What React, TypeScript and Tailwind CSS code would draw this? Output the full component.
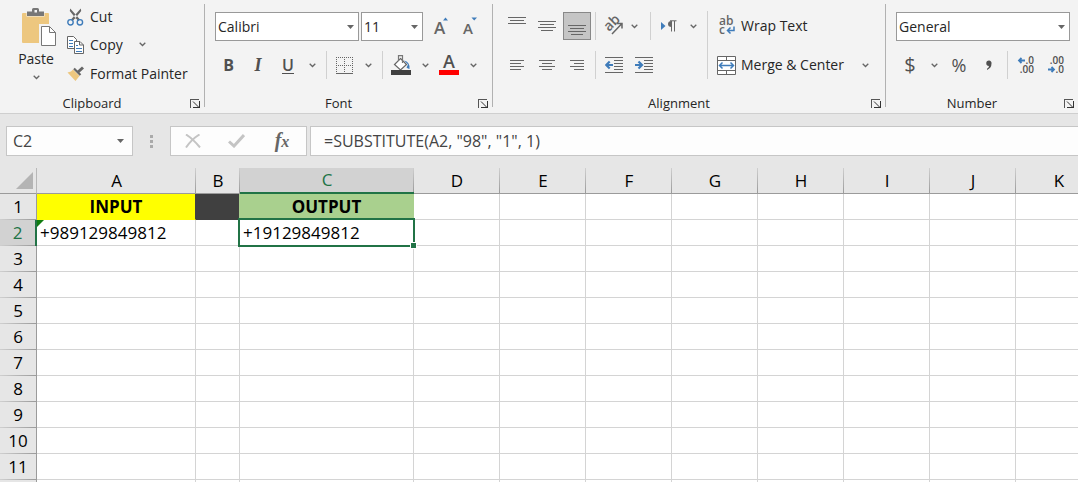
import type { ReactNode } from "react";

const columns = [
  { name: "A", width: 159 },
  { name: "B", width: 44 },
  { name: "C", width: 174 },
  { name: "D", width: 86 },
  { name: "E", width: 86 },
  { name: "F", width: 86 },
  { name: "G", width: 86 },
  { name: "H", width: 86 },
  { name: "I", width: 86 },
  { name: "J", width: 86 },
  { name: "K", width: 86 },
];

const rows = Array.from({ length: 12 }, (_, i) => i + 1);

const cells: Record<string, string> = {
  A1: "INPUT",
  C1: "OUTPUT",
  A2: "+989129849812",
  C2: "+19129849812",
};

const cellStyles: Record<string, string> = {
  A1: "bg-[#ffff00] border-b-[#ffff00] border-r-[#404040] text-center font-bold",
  B1: "bg-[#404040] border-b-[#404040] border-r-[#a9d08e]",
  C1: "bg-[#a9d08e] border-[#a9d08e] text-center font-bold",
};

function Chevron() {
  return (
    <svg width="7" height="5" viewBox="0 0 7 5" fill="none" stroke="#666" strokeWidth="1.3">
      <path d="M0.7 0.8 3.5 3.5 6.3 0.8" />
    </svg>
  );
}

function Caret({ className = "" }: { className?: string }) {
  return (
    <svg className={className} width="7" height="4" viewBox="0 0 7 4" fill="#666">
      <path d="M0 0h7L3.5 4z" />
    </svg>
  );
}

function ToolButton({ label, className = "w-7", children }: { label: string; className?: string; children: ReactNode }) {
  return (
    <button aria-label={label} className={`flex h-7 shrink-0 items-center justify-center text-[#505050] ${className}`}>
      {children}
    </button>
  );
}

function MenuButton({ label, className = "w-5" }: { label: string; className?: string }) {
  return (
    <ToolButton label={label} className={className}>
      <Chevron />
    </ToolButton>
  );
}

function Separator() {
  return <span className="mx-1 h-7 w-px shrink-0 bg-[#d0d0d0]" />;
}

function Combo({ label, value, className }: { label: string; value: string; className: string }) {
  return (
    <div className={`relative h-[29px] ${className}`}>
      <select aria-label={label} className="h-full w-full appearance-none border border-[#999] bg-white pl-[2px] text-sm text-[#262626]">
        <option>{value}</option>
      </select>
      <Caret className="pointer-events-none absolute right-[5px] top-[13px]" />
    </div>
  );
}

function Group({ title, children }: { title: string; children: ReactNode }) {
  return (
    <>
      <section className="flex shrink-0 flex-col justify-between">
        {children}
        <div className="flex h-5 items-center">
          <h2 className="flex-1 text-center text-[13px] leading-5">{title}</h2>
          <button aria-label={`${title} settings`} className="mr-1 flex w-4 justify-end">
            <svg width="10" height="9" viewBox="0 0 10 9" fill="none" stroke="#555" shapeRendering="crispEdges">
              <path d="M0.5 9V0.5H9" />
              <path d="M9.5 2v6.500H3" stroke="#333" />
              <path d="M3 2.500l5.500 5.500" shapeRendering="auto" stroke="#333" />
            </svg>
          </button>
        </div>
      </section>
      <span className="mb-1.5 mt-1 w-px shrink-0 bg-[#b1b1b1] last:hidden" />
    </>
  );
}

function Lines({ spans, size = 18 }: { spans: number[][]; size?: number }) {
  return (
    <svg width={size} height="28" viewBox={`0 0 ${size} 28`} fill="#666" shapeRendering="crispEdges">
      {spans.map(([x, y, w]) => (
        <rect key={y} x={x} y={y} width={w} height="1" />
      ))}
    </svg>
  );
}

function IndentIcon({ right = false }: { right?: boolean }) {
  return (
    <svg width="18" height="16" viewBox="0 0 18 16">
      <path d="M0 0.5h18M9 3.500h9M9 6.500h9M9 9.500h9M9 12.500h9M0 15.500h18" stroke="#666" shapeRendering="crispEdges" />
      <path d={right ? "M0 8h7M3.500 4.500 7 8 3.500 11.500" : "M8 8H1.500M4.700 4.500 1.200 8 4.700 11.500"} fill="none" stroke="#3f7cba" strokeWidth="2.200" />
    </svg>
  );
}

function Clipboard() {
  return (
    <div className="flex pl-4 pt-1">
      <button className="flex w-10 flex-col items-center pt-1 text-sm leading-5">
        <svg className="ml-[6px]" width="34" height="39" viewBox="0 0 34 39">
          <rect x="0" y="5" width="27" height="30" rx="1" fill="#edc77f" />
          <path d="M4.500 4v4.500h18V4z" fill="#f3f3f3" />
          <path d="M5 3.500h5v-2Q10 0 11.500 0h4Q17 0 17 1.500v2h5V8H5z" fill="#777" />
          <rect x="12.500" y="2" width="2.500" height="2.500" fill="#f3f3f3" />
          <path d="M18.500 17.500v20h15V24l-6-6.500z" fill="#f3f3f3" stroke="#f3f3f3" strokeWidth="3" />
          <path d="M19.500 18.500v19h14V24.500l-6-6zM27.500 18.500v6h6" fill="#fff" stroke="#777" />
        </svg>
        <span className="mt-[2px]">Paste</span>
        <span className="mt-1.5">
          <Chevron />
        </span>
      </button>
      <div className="ml-[11px] flex w-[137px] flex-col text-sm">
        <button className="flex h-[26px] items-center gap-[6px]">
          <svg width="17" height="18" viewBox="0 0 17 18" fill="none">
            <path d="M3.200 0.500 5 2.500 13 11.500 11.500 13 8 9.500 2.800 3zM13.800 0.500 12 2.500 4 11.500 5.500 13 9 9.500 14.200 3z" fill="#666" />
            <circle cx="3.500" cy="14.300" r="2.700" stroke="#3f7cba" strokeWidth="1.400" />
            <circle cx="12.900" cy="14.300" r="2.700" stroke="#3f7cba" strokeWidth="1.400" />
          </svg>
          Cut
        </button>
        <div className="flex">
          <button className="flex h-[29px] items-center gap-[6px]">
            <svg width="17" height="18" viewBox="0 0 17 18" fill="#fff" stroke="#666">
              <path d="M0.500 0.500h6l3 3v9h-9z" />
              <path d="M2 4.500h4M2 7.500h4M2 10.500h4" stroke="#3f7cba" />
              <path d="M7.500 5.500h5.500l3.500 3.500v8.500h-9zM12.500 5.500v3.500h4" />
              <path d="M9 9.500h2M9 12.500h6M9 15.500h6" stroke="#3f7cba" />
            </svg>
            Copy
          </button>
          <MenuButton label="Copy options" className="ml-2 w-6" />
        </div>
        <button className="flex h-[29px] items-center gap-[6px] whitespace-nowrap">
          <svg className="shrink-0" width="17" height="16" viewBox="0 0 17 16">
            <path d="M0.500 6.500 4 5.500 6 3.500 12.500 10 8.500 15z" fill="#edc77f" />
            <path d="M7 2.500 13.500 9" stroke="#666" strokeWidth="2.200" />
            <path d="M11 6 16 1.500" stroke="#666" strokeWidth="3" />
          </svg>
          Format Painter
        </button>
      </div>
    </div>
  );
}

function FontTools() {
  return (
    <div className="flex flex-col gap-[10px] pl-[10px] pr-[9px] pt-3">
      <div className="flex gap-[2px]">
        <Combo label="Font" value="Calibri" className="w-36" />
        <Combo label="Font size" value="11" className="w-[62px]" />
        <div className="flex">
          <ToolButton label="Increase font size" className="w-[29px]">
            <svg className="overflow-visible" width="16" height="18" viewBox="0 0 16 18">
              <text x="2" y="17" fontSize="17" fontWeight="600" fill="#666">A</text>
              <path d="M11 3.500 13.500 0.500l2.500 3z" fill="#3f7cba" />
            </svg>
          </ToolButton>
          <ToolButton label="Decrease font size" className="w-[29px]">
            <svg className="overflow-visible" width="16" height="18" viewBox="0 0 16 18">
              <text x="2" y="17" fontSize="15" fontWeight="600" fill="#666">A</text>
              <path d="M10.500 0.500H16L13.200 3.500z" fill="#3f7cba" />
            </svg>
          </ToolButton>
        </div>
      </div>
      <div className="flex items-center">
        <ToolButton label="Bold" className="w-[27px]">
          <b className="text-base">B</b>
        </ToolButton>
        <ToolButton label="Italic" className="w-8">
          <i className="font-['Liberation_Serif',serif] text-lg font-bold">I</i>
        </ToolButton>
        <ToolButton label="Underline">
          <span className="border-b border-[#505050] text-base font-semibold leading-4">U</span>
        </ToolButton>
        <MenuButton label="Underline options" />
        <Separator />
        <ToolButton label="Borders" className="w-[27px]">
          <svg width="17" height="17" viewBox="0 0 17 17" stroke="#666" shapeRendering="crispEdges">
            <path d="M0 0.500h17M0 8.500h17M0.500 0v16M8.500 0v16M16.500 0v16" strokeDasharray="1 1" />
            <path d="M0 16.500h17" />
          </svg>
        </ToolButton>
        <MenuButton label="Border options" />
        <Separator />
        <ToolButton label="Fill color">
          <svg width="20" height="20" viewBox="0 0 20 20">
            <path d="M9.500 3.500 15.500 9.500 9.500 15 3.500 9.500z" fill="#fff" stroke="#666" strokeWidth="1.200" />
            <path d="M7.500 6V0.600h4V8" fill="none" stroke="#777" strokeWidth="1.200" />
            <path d="M13 5.500Q19 6.500 18.500 14Q17 13.500 15.500 12.500L17 9.500z" fill="#3f7cba" />
            <rect y="15" width="20" height="5" fill="#404040" />
          </svg>
        </ToolButton>
        <MenuButton label="Fill color options" />
        <ToolButton label="Font color">
          <svg className="overflow-visible" width="20" height="20" viewBox="0 0 20 20">
            <text x="10" y="13" textAnchor="middle" fontSize="18" fontWeight="600" fill="#505050">A</text>
            <rect y="15" width="20" height="5" fill="#f00" />
          </svg>
        </ToolButton>
        <MenuButton label="Font color options" />
      </div>
    </div>
  );
}

function Alignment() {
  return (
    <div className="flex pl-[10px]">
      <div className="flex flex-col gap-[11px] pt-3">
        <div className="flex">
          <div className="flex gap-[2px]">
            <ToolButton label="Top align">
              <Lines spans={[[0, 5, 18], [2, 8, 14], [0, 11, 18]]} />
            </ToolButton>
            <ToolButton label="Middle align">
              <Lines spans={[[0, 9, 18], [2, 12, 14], [0, 15, 18], [3, 18, 12]]} />
            </ToolButton>
            <ToolButton label="Bottom align" className="w-7 border border-[#888] bg-[#c5c5c5]">
              <Lines spans={[[0, 13, 18], [2, 16, 14], [0, 19, 18], [3, 22, 12]]} />
            </ToolButton>
          </div>
          <Separator />
          <ToolButton label="Orientation">
            <svg className="overflow-visible" width="20" height="18" viewBox="0 0 20 18">
              <text x="5" y="15" fontSize="14" fontWeight="600" fill="#666" transform="rotate(-45 5 15)">ab</text>
              <path d="M8 17 17.500 7M13 6.500h5v5" fill="none" stroke="#666" strokeWidth="1.500" />
            </svg>
          </ToolButton>
          <MenuButton label="Orientation options" className="mr-[6px] w-3" />
          <Separator />
          <ToolButton label="Text direction">
            <svg width="16" height="12" viewBox="0 0 16 12">
              <path d="M0 2v8l4.500-4z" fill="#3f7cba" />
              <path d="M10.500 1Q7 1 7 4t3.500 3z" fill="#666" />
              <path d="M10.500 1v10.500M13.500 1v10.500M9 0.800h6.500" fill="none" stroke="#666" />
            </svg>
          </ToolButton>
          <MenuButton label="Text direction options" />
        </div>
        <div className="flex">
          <div className="flex gap-[2px]">
            <ToolButton label="Align left">
              <Lines size={14} spans={[[0, 9, 14], [0, 12, 11], [0, 15, 14], [0, 18, 11]]} />
            </ToolButton>
            <ToolButton label="Center">
              <Lines size={16} spans={[[0, 9, 16], [3, 12, 10], [0, 15, 16], [3, 18, 10]]} />
            </ToolButton>
            <ToolButton label="Align right">
              <Lines size={14} spans={[[0, 9, 14], [4, 12, 10], [0, 15, 14], [4, 18, 10]]} />
            </ToolButton>
          </div>
          <Separator />
          <div className="flex gap-[2px]">
            <ToolButton label="Decrease indent">
              <IndentIcon />
            </ToolButton>
            <ToolButton label="Increase indent">
              <IndentIcon right />
            </ToolButton>
          </div>
        </div>
      </div>
      <span className="ml-1 mt-[11px] w-px bg-[#d0d0d0]" />
      <div className="flex flex-col gap-[11px] pl-[9px] pr-[10px] pt-3 text-sm">
        <button className="flex h-7 items-center gap-1">
          <svg className="overflow-visible" width="20" height="20" viewBox="0 0 20 20">
            <text x="2" y="9" fontSize="12" fontWeight="600" fill="#666">ab</text>
            <text x="2" y="18" fontSize="12" fontWeight="600" fill="#666">c</text>
            <path d="M17 10.500v4h-6M13.500 11.500l-3 3 3 3" fill="none" stroke="#3f7cba" strokeWidth="1.500" />
          </svg>
          Wrap Text
        </button>
        <div className="flex">
          <button className="flex h-7 w-[138px] items-center gap-1 whitespace-nowrap">
            <svg className="shrink-0" width="20" height="19" viewBox="0 0 20 19">
              <path d="M0.500 0.500h18v18h-18zM0.500 4.500h18M0.500 14.500h18M9.500 0.500v4M9.500 14.500v4" fill="#fff" stroke="#666" />
              <path d="M3 9.500h13M5.500 6.500l-3 3 3 3M13.500 6.500l3 3-3 3" fill="none" stroke="#3f7cba" strokeWidth="1.500" />
            </svg>
            Merge &amp; Center
          </button>
          <MenuButton label="Merge options" />
        </div>
      </div>
    </div>
  );
}

function DecimalIcon({ increase = false }: { increase?: boolean }) {
  return (
    <svg className="overflow-visible" width="18" height="18" viewBox="0 0 18 18" fontSize="10" fontWeight="600" fill="#505050">
      <text x="17" y="8" textAnchor="end">{increase ? ".0" : ".00"}</text>
      <text x="17" y="17" textAnchor="end">{increase ? ".00" : ".0"}</text>
      <path d={increase ? "M8 4.500H2.500M4.500 2 2 4.500 4.500 7" : "M1 13.500h5.500M4.500 11 7 13.500 4.500 16"} fill="none" stroke="#3f7cba" strokeWidth="1.800" />
    </svg>
  );
}

function NumberTools() {
  return (
    <div className="flex flex-col gap-[10px] pl-[10px] pr-2 pt-3">
      <Combo label="Number format" value="General" className="w-full" />
      <div className="flex">
        <div className="flex gap-px">
          <div className="flex">
            <ToolButton label="Accounting format">
              <span className="text-xl">$</span>
            </ToolButton>
            <MenuButton label="Accounting options" />
          </div>
          <ToolButton label="Percent style">
            <span className="text-lg">%</span>
          </ToolButton>
          <ToolButton label="Comma style" className="w-[29px]">
            <svg width="6" height="11" viewBox="0 0 6 11" fill="#505050">
              <path d="M3 0.500A2.500 2.500 0 0 1 5.500 3.500Q5.500 8 1 10V8.800Q3 7.800 3 6A2.700 2.700 0 0 1 3 0.500z" />
            </svg>
          </ToolButton>
        </div>
        <Separator />
        <div className="flex gap-[2px]">
          <ToolButton label="Increase decimal">
            <DecimalIcon increase />
          </ToolButton>
          <ToolButton label="Decrease decimal">
            <DecimalIcon />
          </ToolButton>
        </div>
      </div>
    </div>
  );
}

function FormulaBar() {
  return (
    <div className="flex h-[30px] shrink-0 pl-1.5 text-[#444]">
      <div className="flex w-[127px] border border-[#c6c6c6] bg-[#fdfdfd]">
        <input aria-label="Name box" defaultValue="C2" className="w-full min-w-0 bg-transparent pl-1.5 text-base" />
        <button aria-label="Named ranges" className="flex w-6 shrink-0 items-center justify-center">
          <Caret />
        </button>
      </div>
      <div className="flex w-[37px] flex-col items-center justify-center gap-[2px]">
        <span className="size-[3px] bg-[#aaa]" />
        <span className="size-[3px] bg-[#aaa]" />
        <span className="size-[3px] bg-[#aaa]" />
      </div>
      <div className="flex w-[137px] items-center justify-between border border-[#c6c6c6] bg-[#fdfdfd] px-3.5">
        <button aria-label="Cancel">
          <svg width="16" height="14" viewBox="0 0 16 14" fill="none" stroke="#c4c4c4" strokeWidth="2">
            <path d="M1 0.500Q8 5 15 13.500M14.500 0.500Q7 5 1 13.500" />
          </svg>
        </button>
        <button aria-label="Enter">
          <svg width="17" height="14" viewBox="0 0 17 14" fill="none" stroke="#c4c4c4" strokeWidth="3">
            <path d="M1 7.500 6 12 16 1" />
          </svg>
        </button>
        <button aria-label="Insert function" className="w-5 font-['Liberation_Serif',serif] text-xl font-bold italic leading-5 text-[#666]">
          <span>f</span>
          <span className="text-base leading-5">x</span>
        </button>
      </div>
      <input
        aria-label="Formula"
        defaultValue={'=SUBSTITUTE(A2, "98", "1", 1)'}
        className="ml-[3px] min-w-0 flex-1 border border-r-0 border-[#c6c6c6] bg-[#fdfdfd] pl-[13px] text-base"
      />
    </div>
  );
}

function Sheet() {
  return (
    <div className="mt-3 min-h-0 flex-1 overflow-hidden">
      <table className="w-max table-fixed border-separate border-spacing-0 bg-white text-[17px] leading-6 text-black">
        <colgroup>
          <col style={{ width: 37 }} />
          {columns.map((col) => (
            <col key={col.name} style={{ width: col.width }} />
          ))}
        </colgroup>
        <thead>
          <tr className="h-[26px]">
            <th aria-label="Select all" className="w-[37px] border-b border-r border-[#9b9b9b] border-r-[#b8b8b8] bg-[#e6e6e6] p-0">
              <svg className="ml-auto mr-[3px]" width="17" height="17" viewBox="0 0 17 17">
                <path d="M17 0v17H0z" fill="#b4b4b4" />
              </svg>
            </th>
            {columns.map((col) => (
              <th
                key={col.name}
                style={{ width: col.width }}
                className={`relative p-0 font-normal ${
                  col.name === "C" ? "border-b-2 border-[#217346] bg-[#d2d2d2] text-[#217346]" : "border-b border-[#9b9b9b] bg-[#e6e6e6]"
                }`}
              >
                {col.name}
                <span className="absolute bottom-0 right-0 top-0 w-px bg-linear-to-b from-[#cfcfcf] to-[#9b9b9b]" />
              </th>
            ))}
          </tr>
        </thead>
        <tbody>
          {rows.map((row) => (
            <tr key={row} className="h-[26px]">
              <th
                className={`relative p-0 font-normal ${
                  row === 2 ? "border-r-2 border-[#217346] bg-[#d2d2d2] text-[#217346]" : "border-r border-[#9b9b9b] bg-[#e6e6e6]"
                }`}
              >
                {row}
                <span className="absolute bottom-0 left-0 right-0 h-px bg-linear-to-r from-[#cfcfcf] to-[#9b9b9b]" />
              </th>
              {columns.map((col) => {
                const id = `${col.name}${row}`;
                return (
                  <td key={id} className={`relative border-b border-r px-[3px] py-0 ${cellStyles[id] ?? "border-[#d4d4d4]"}`}>
                    {cells[id]}
                    {id === "A2" && (
                      <svg className="absolute left-0 top-0" width="7" height="7" viewBox="0 0 7 7">
                        <path d="M0 0h7L0 7z" fill="#107c10" />
                      </svg>
                    )}
                    {id === "C2" && (
                      <>
                        <span className="absolute -inset-[2px] z-10 border-2 border-[#217346]" />
                        <span className="absolute -bottom-1 -right-1 z-20 size-[7px] border border-white bg-[#217346]" />
                      </>
                    )}
                  </td>
                );
              })}
            </tr>
          ))}
        </tbody>
      </table>
    </div>
  );
}

export default function App() {
  return (
    <div className="flex h-screen flex-col overflow-hidden bg-[#e6e6e6] font-['Open_Sans',sans-serif] text-[#262626]">
      <header className="mb-3 flex h-[114px] shrink-0 border-b border-[#cfcfcf] bg-[#f3f3f3]">
        <Group title="Clipboard">
          <Clipboard />
        </Group>
        <Group title="Font">
          <FontTools />
        </Group>
        <Group title="Alignment">
          <Alignment />
        </Group>
        <Group title="Number">
          <NumberTools />
        </Group>
      </header>
      <FormulaBar />
      <Sheet />
    </div>
  );
}
